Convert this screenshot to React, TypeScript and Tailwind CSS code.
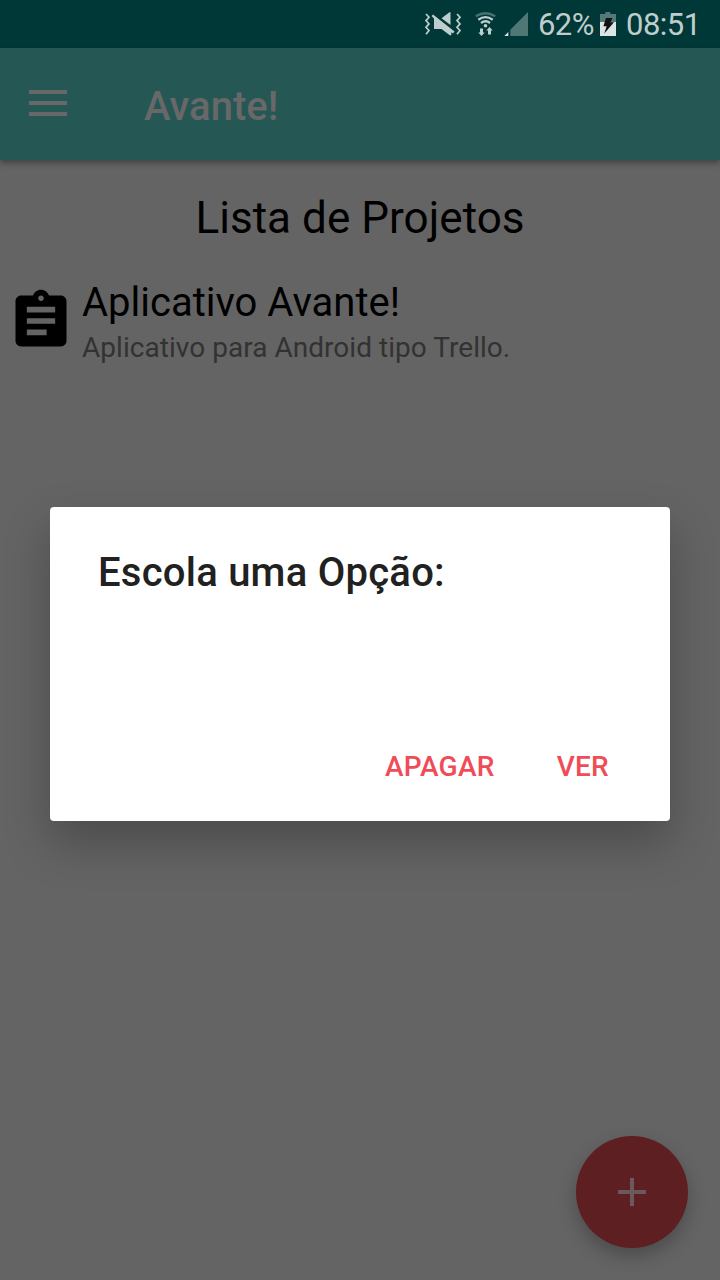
function StatusIcons() {
  return (
    <svg className="ml-[420px] h-12 w-[110px] shrink-0" viewBox="420 0 110 48" fill="none">
      <g stroke="#bfcecd" strokeWidth="1.7">
        <path d="M426 14l3 3.300-3 3.300 3 3.300-3 3.300 3 3.300-3 3.800" />
        <path d="M457 14l3 3.300-3 3.300 3 3.300-3 3.300 3 3.300-3 3.800" />
      </g>
      <path fill="#bfcecd" d="M431.500 16l1.500-1.500L454.500 31.500l-1.500 2-1.700-1.200V35.300h-1.500L441.500 29H434V18.500z" />
      <path fill="#bfcecd" d="M441.500 18.300l8-6h1v12.700z" />
      <path stroke="#467270" strokeWidth="2.500" d="M475.800 16.200q9.700-6.100 19.400 0" />
      <g stroke="#bfcecd" strokeWidth="2.300">
        <path d="M478.300 19.700q7.200-5 14.400 0" />
        <path d="M481 23q4.500-3.500 9 0" />
      </g>
      <circle cx="485.500" cy="25.800" r="1.800" fill="#bfcecd" />
      <path fill="#bfcecd" d="M480 28.500h3v4h1.700L481.500 36l-3.200-3.500H480zM488 34.500v-4h-1.700l3.200-3.500 3.200 3.500H491v4z" />
      <path fill="#4f7775" d="M510.300 36V29.800L528 12v24z" />
      <path fill="#dce5e4" d="M504.300 36l4-4v4z" />
    </svg>
  );
}

function Battery() {
  return (
    <svg className="h-12 w-[18px] shrink-0" viewBox="599 0 18 48">
      <path fill="#527a78" d="M600 14h5.300v-2h5v2h5.700v8h-16z" />
      <path fill="#dce5e4" d="M600 22h16v14h-16z" />
      <path fill="#111" d="M606 18h6.500l-2 4.300h3.500L604.300 33.500l2.300-7.200h-3.200z" />
    </svg>
  );
}

export default function App() {
  return (
    <div className="relative flex h-[1280px] w-[720px] flex-col overflow-hidden bg-[#646464] font-[Roboto,sans-serif]">
      <div className="flex h-12 shrink-0 items-center bg-[#003837] text-[#bfcecd]">
        <StatusIcons />
        <span className="ml-2 w-[61px] shrink-0 whitespace-nowrap pt-0.5 text-[31px] leading-12 tracking-[-0.6px]">62%</span>
        <Battery />
        <span className="ml-[9px] whitespace-nowrap pt-0.5 text-[31px] leading-12 tracking-[-0.5px]">08:51</span>
      </div>
      <header className="flex h-28 shrink-0 items-center bg-[#255754] shadow-[0_3px_6px_rgba(0,0,0,0.35)]">
        <svg className="mb-0.5 ml-[29px] h-[26px] w-[38px]" viewBox="0 0 38 26" fill="#686868">
          <path d="M0 0h38v4H0zM0 11h38v4H0zM0 22h38v4H0z" />
        </svg>
        <span className="ml-[77px] pt-1.5 text-[40px] font-medium leading-none text-[#686868]">Avante!</span>
      </header>
      <main className="flex grow flex-col">
        <h1 className="mt-8 text-center text-[44px] leading-[52px] tracking-[0.05px] text-black">Lista de Projetos</h1>
        <div className="mt-[33px] flex pl-[7px]">
          <svg className="mt-[10px] h-[68px] w-[68px] shrink-0" viewBox="0 0 24 24">
            <path d="M19 3h-4.180C14.400 1.840 13.300 1 12 1c-1.300 0-2.400.84-2.820 2H5c-1.100 0-2 .9-2 2v14c0 1.100.9 2 2 2h14c1.100 0 2-.9 2-2V5c0-1.100-.9-2-2-2zm-7 0c.55 0 1 .45 1 1s-.45 1-1 1-1-.45-1-1 .45-1 1-1zm2 14H7v-2h7v2zm3-4H7v-2h10v2zm0-4H7V7h10v2z" />
          </svg>
          <div className="ml-[7px]">
            <div className="text-[40px] leading-[52px] text-black">Aplicativo Avante!</div>
            <div className="text-[28px] leading-[38px] tracking-[0.04px] text-[#323232]">Aplicativo para Android tipo Trello.</div>
          </div>
        </div>
      </main>
      <button className="absolute bottom-8 right-8 flex h-28 w-28 items-center justify-center rounded-full bg-[#5e1f22] shadow-[0_8px_18px_rgba(0,0,0,0.25)]">
        <svg className="h-7 w-7" viewBox="0 0 28 28" fill="#6b5a5c">
          <path d="M12 0h4v12h12v4H16v12h-4V16H0v-4h12z" />
        </svg>
      </button>
      <div className="absolute left-[50px] top-[507px] flex h-[314px] w-[620px] flex-col rounded bg-white px-12 pt-[42px] shadow-[0_22px_46px_rgba(0,0,0,0.25)]">
        <h2 className="text-[40px] font-medium leading-[48px] tracking-[0.24px] text-[#212121]">Escola uma Opção:</h2>
        <div className="mb-[34px] mt-auto flex justify-end gap-[62px] pr-[13px] text-[28px] font-medium leading-10 tracking-[0.28px] text-[#ef4c58]">
          <button>APAGAR</button>
          <button>VER</button>
        </div>
      </div>
    </div>
  );
}
